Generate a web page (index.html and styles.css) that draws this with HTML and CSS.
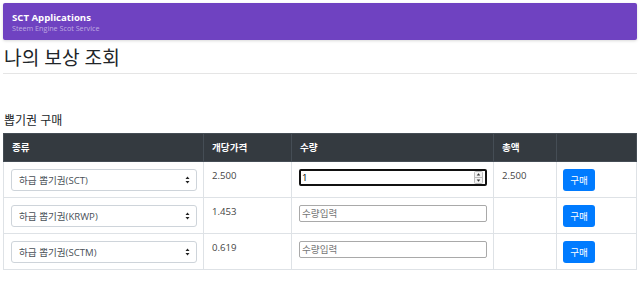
FILE: index.html
```html
<!DOCTYPE html>
<html lang="ko">
  <head>
    <meta charset="utf-8" />
    <link rel="stylesheet" href="styles.css">
  </head>

  <body>
    <div class="appbar">
      <div class="appTitle">SCT Applications</div>
      <div class="appSub">Steem Engine Scot Service</div>
    </div>

    <h2 class="pageTitle">나의 보상 조회</h2>
    <hr class="rule" />

    <h5 class="sectionTitle">뽑기권 구매</h5>
    <table class="buyTable">
      <colgroup>
        <col style="width: 200px" />
        <col style="width: 88px" />
        <col style="width: 202px" />
        <col style="width: 63px" />
        <col />
      </colgroup>
      <thead>
        <tr>
          <th>종류</th>
          <th>개당가격</th>
          <th>수량</th>
          <th>총액</th>
          <th></th>
        </tr>
      </thead>
      <tbody>
        <tr>
          <td>
            <span class="selectWrap">
              <select class="ticketSelect"><option>하급 뽑기권(SCT)</option></select>
              <svg class="arrows" width="5" height="8" viewBox="0 0 5 8"><path d="M2.5 0.5 L4.5 3 L0.5 3 Z M2.5 7.5 L4.5 5 L0.5 5 Z" fill="#222"/></svg>
            </span>
          </td>
          <td>2.500</td>
          <td>
            <span class="qtyWrap">
              <input class="qty qtyFocus" type="text" value="1" />
              <svg class="spin" width="9" height="13" viewBox="0 0 9 13"><rect x="0.5" y="0.5" width="8" height="12" rx="1" fill="#f3f3f3" stroke="#bbb"/><line x1="0.5" y1="6.5" x2="8.5" y2="6.5" stroke="#bbb"/><path d="M4.5 2.2 L6.3 4.6 L2.7 4.6 Z M4.5 10.8 L6.3 8.4 L2.7 8.4 Z" fill="#333"/></svg>
            </span>
          </td>
          <td>2.500</td>
          <td><button class="buyBtn">구매</button></td>
        </tr>
        <tr>
          <td>
            <span class="selectWrap">
              <select class="ticketSelect"><option>하급 뽑기권(KRWP)</option></select>
              <svg class="arrows" width="5" height="8" viewBox="0 0 5 8"><path d="M2.5 0.5 L4.5 3 L0.5 3 Z M2.5 7.5 L4.5 5 L0.5 5 Z" fill="#222"/></svg>
            </span>
          </td>
          <td>1.453</td>
          <td><input class="qty" type="text" placeholder="수량입력" /></td>
          <td></td>
          <td><button class="buyBtn">구매</button></td>
        </tr>
        <tr>
          <td>
            <span class="selectWrap">
              <select class="ticketSelect"><option>하급 뽑기권(SCTM)</option></select>
              <svg class="arrows" width="5" height="8" viewBox="0 0 5 8"><path d="M2.5 0.5 L4.5 3 L0.5 3 Z M2.5 7.5 L4.5 5 L0.5 5 Z" fill="#222"/></svg>
            </span>
          </td>
          <td>0.619</td>
          <td><input class="qty" type="text" placeholder="수량입력" /></td>
          <td></td>
          <td><button class="buyBtn">구매</button></td>
        </tr>
      </tbody>
    </table>
  </body>
</html>
```

FILE: styles.css
```css
body {
  margin: 0;
  padding: 3px;
  font-family: "Open Sans", "Noto Sans CJK KR", sans-serif;
  font-size: 9.6px;
  line-height: 1.5;
  color: #212529;
  background: #fff;
}

.appbar {
  height: 37px;
  box-sizing: border-box;
  padding: 9px 9px;
  background-color: #6f42c1;
  border-radius: 2px;
  box-shadow: 0 1px 3px rgba(0, 0, 0, 0.15);
  color: #fff;
}
.appTitle {
  font-weight: 700;
  font-size: 9.6px;
  line-height: 12px;
}
.appSub {
  font-size: 7.2px;
  line-height: 9px;
  color: rgba(255, 255, 255, 0.55);
}

.pageTitle {
  margin: 6px 0 0 1px;
  font-size: 19.2px;
  font-weight: 400;
  line-height: 23px;
}
.rule {
  margin: 4px 0 0 0;
  border: 0;
  border-top: 1px solid #e5e5e5;
}

.sectionTitle {
  margin: 39px 0 0 1px;
  font-size: 12px;
  font-weight: 400;
  line-height: 15px;
}

.buyTable {
  margin-top: 5px;
  width: 634px;
  border-collapse: collapse;
  table-layout: fixed;
}
.buyTable th,
.buyTable td {
  border: 1px solid #dee2e6;
  padding: 7px 7px 6px 8px;
  text-align: left;
  vertical-align: top;
  color: #444;
}
.buyTable th {
  background-color: #343a40;
  border-color: #454d55;
  color: #fff;
  font-weight: 700;
  line-height: 14px;
}

.selectWrap {
  position: relative;
  display: block;
}
.ticketSelect {
  -webkit-appearance: none;
  appearance: none;
  display: block;
  width: 186px;
  height: 22px;
  margin-left: -1px;
  padding: 0 7px;
  border: 1px solid #ced4da;
  border-radius: 3px;
  background: #fff;
  font-family: "Open Sans", "Noto Sans CJK KR", sans-serif;
  font-size: 9.6px;
  color: #495057;
}
.arrows {
  position: absolute;
  left: 173px;
  top: 7px;
}

.qtyWrap {
  position: relative;
  display: block;
}
.qty {
  display: block;
  width: 188px;
  height: 17px;
  box-sizing: border-box;
  margin: 0 0 0 -1px;
  padding: 1px 2px;
  border: 1px solid #a9a9a9;
  border-radius: 2px;
  font-family: "Open Sans", "Noto Sans CJK KR", sans-serif;
  font-size: 9.6px;
  color: #000;
}
.qty::placeholder {
  color: #757575;
}
.qtyFocus {
  border: 2px solid #111;
  border-radius: 2px;
  padding: 0 1px;
}
.spin {
  position: absolute;
  left: 174px;
  top: 2px;
}

.buyBtn {
  display: block;
  width: 32px;
  height: 22px;
  margin-left: -2px;
  padding: 0;
  border: 0;
  border-radius: 3px;
  background-color: #007bff;
  color: #fff;
  font-family: "Open Sans", "Noto Sans CJK KR", sans-serif;
  font-size: 9.6px;
  cursor: pointer;
}
```
